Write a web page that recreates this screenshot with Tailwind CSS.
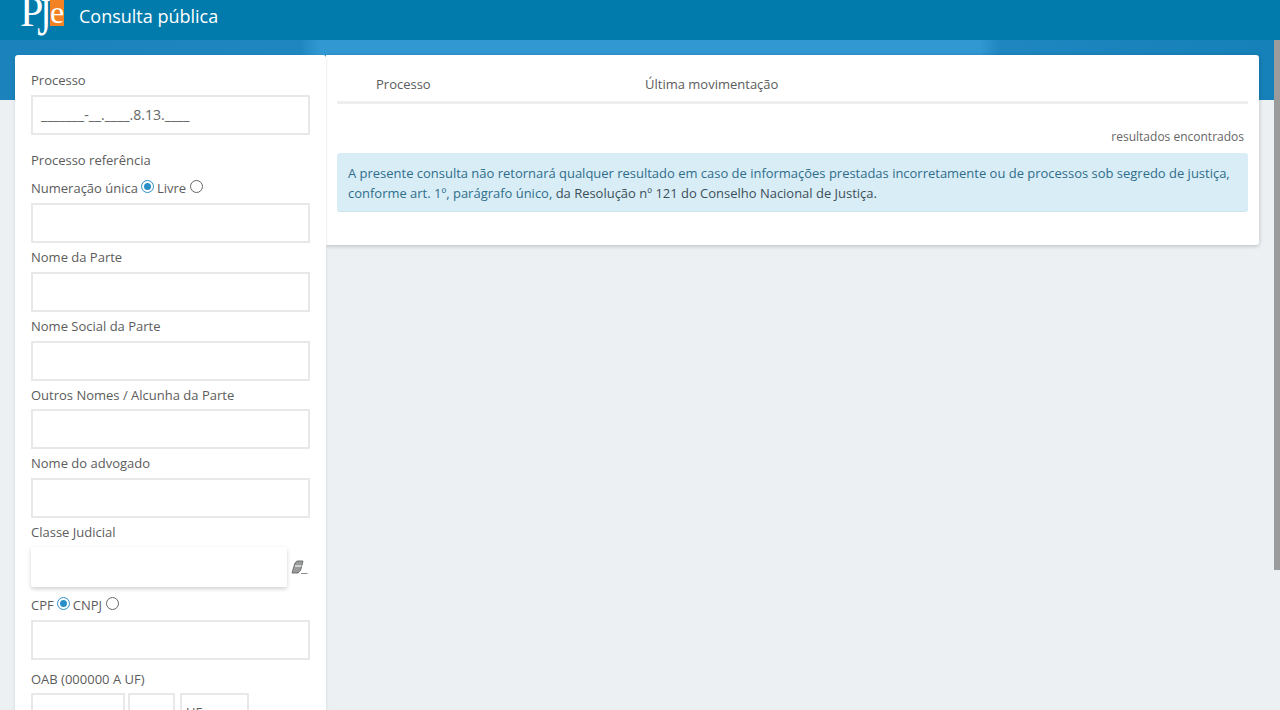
<!DOCTYPE html>
<html lang="pt-BR">
<head>
  <meta charset="UTF-8" />
  <title>Consulta pública</title>
  <script src="https://cdn.jsdelivr.net/npm/@tailwindcss/browser@4"></script>
</head>
<body class="h-[710px] overflow-hidden bg-[#ecf0f2] font-['Open_Sans',sans-serif] text-[13px] leading-[18px] text-[#5c5c5c]">

  <!-- Header -->
  <header class="h-10 bg-[#007bac] flex items-center relative z-10">
    <div class="relative w-[79px] h-10 shrink-0 font-['Liberation_Serif',serif] text-white">
      <span class="absolute left-[20px] top-[-12px] text-[42px] leading-[48px]">P</span>
      <span class="absolute left-[36px] top-[-14px] text-[42px] leading-[48px] origin-top scale-y-[1.3] scale-x-[0.85]">J</span>
      <span class="absolute left-[50px] top-0 w-[14px] h-[26px] bg-[#f28224] text-[32px] leading-[24px] text-center">e</span>
    </div>
    <span class="text-[18px] text-white mb-2">Consulta pública</span>
  </header>

  <!-- Blue band behind the panels -->
  <div class="absolute left-0 right-0 top-10 h-[60px] bg-[linear-gradient(90deg,#1b82bc_0,#1f86c0_300px,#3298d2_320px,#3298d2_980px,#1f86c0_1000px,#1580b8_1280px)]"></div>

  <main class="relative flex items-start pl-[15px] pr-[21px] pt-[15px]">
    <!-- Search form -->
    <aside class="relative z-10 w-[311px] shrink-0 h-[700px] bg-white rounded-t-[3px] px-4 pt-4 shadow-[0_1px_3px_rgba(0,0,0,0.12)]">
      <label class="block h-[18px]">Processo</label>
      <div class="mt-[6px] h-10 w-[279px] border-2 border-[#e6e8e9] flex items-center pl-2 text-[#666] text-[14.1px]">_______-__.____.8.13.____</div>

      <label class="block h-[18px] mt-4">Processo referência</label>
      <div class="mt-[9px] h-[18px] flex items-center pt-px">
        <span>Numeração única</span>
        <span class="ml-[3px] w-[13px] h-[13px] rounded-full border border-[#2a8fc6] p-[2px] -mt-[3px]"><span class="block w-full h-full rounded-full bg-[#2a8fc6]"></span></span>
        <span class="ml-[3px]">Livre</span>
        <span class="ml-1 w-[13px] h-[13px] rounded-full border border-[#666] bg-white -mt-[3px]"></span>
      </div>
      <div class="mt-[7px] h-10 w-[279px] border-2 border-[#e6e8e9]"></div>

      <label class="block h-[18px] mt-[5px]">Nome da Parte</label>
      <div class="mt-[6px] h-10 w-[279px] border-2 border-[#e6e8e9]"></div>

      <label class="block h-[18px] mt-[5px]">Nome Social da Parte</label>
      <div class="mt-[6px] h-10 w-[279px] border-2 border-[#e6e8e9]"></div>

      <label class="block h-[18px] mt-[5px]">Outros Nomes / Alcunha da Parte</label>
      <div class="mt-[5px] h-10 w-[279px] border-2 border-[#e6e8e9]"></div>

      <label class="block h-[18px] mt-[5px]">Nome do advogado</label>
      <div class="mt-[6px] h-10 w-[279px] border-2 border-[#e6e8e9]"></div>

      <label class="block h-[18px] mt-[5px]">Classe Judicial</label>
      <div class="mt-[6px] flex items-center">
        <div class="h-10 w-[256px] rounded-[2px] bg-white shadow-[0_2px_4px_rgba(0,0,0,0.18)]"></div>
        <svg class="ml-[4px]" width="17" height="15" viewBox="0 0 17 15">
          <path d="M1 13 L4 3 L6 1 H12 L9.5 10.5 L7 13 Z" fill="#9a9c9c" stroke="#6f7171" stroke-width="1"/>
          <path d="M4 6 H10.5" stroke="#e2e3e3" stroke-width="1.5" fill="none"/>
          <path d="M10 13.5 H16.5" stroke="#8a8c8c" stroke-width="1" fill="none"/>
        </svg>
      </div>

      <div class="mt-[9px] h-[18px] flex items-center">
        <span>CPF</span>
        <span class="ml-[3px] w-[13px] h-[13px] rounded-full border border-[#2a8fc6] p-[2px] -mt-[3px]"><span class="block w-full h-full rounded-full bg-[#2a8fc6]"></span></span>
        <span class="ml-[3px]">CNPJ</span>
        <span class="ml-1 w-[13px] h-[13px] rounded-full border border-[#666] bg-white -mt-[3px]"></span>
      </div>
      <div class="mt-[6px] h-10 w-[279px] border-2 border-[#e6e8e9]"></div>

      <label class="block h-[18px] mt-[10px]">OAB (000000 A UF)</label>
      <div class="mt-[5px] flex">
        <div class="h-10 w-[94px] border-2 border-[#e6e8e9]"></div>
        <div class="h-10 w-[47px] ml-[3px] border-2 border-[#e6e8e9]"></div>
        <div class="h-10 w-[69px] ml-[5px] border-2 border-[#e6e8e9] pl-[4px] pt-[8px]">UF</div>
      </div>
    </aside>

    <!-- Results -->
    <section class="flex-1 h-[190px] bg-white rounded-r-[3px] px-[11px] shadow-[0_1px_4px_rgba(0,0,0,0.22)]">
      <div class="h-[49px] border-b-[3px] border-[#eceeef] flex items-center pt-[12px] pl-[39px]">
        <span class="w-[269px]">Processo</span>
        <span>Última movimentação</span>
      </div>
      <p class="mt-[24px] pr-[4px] text-right text-[12px] text-[#666]">resultados encontrados</p>
      <div class="mt-[7px] h-[59px] rounded-[3px] bg-[#d9edf7] px-[11px] pt-[11px] text-[#2f6d8b] text-[12.97px] leading-[19.5px] border-b border-[#d0e4ee]">
        A presente consulta não retornará qualquer resultado em caso de informações prestadas incorretamente ou de processos sob segredo de justiça, conforme art. 1º, parágrafo único, <span class="text-[#3c4f58]">da Resolução nº 121 do Conselho Nacional de Justiça.</span>
      </div>
    </section>
  </main>

  <!-- Scrollbar -->
  <div class="absolute right-0 top-10 w-[6px] h-[530px] bg-[#9b9b9b] z-20"></div>
</body>
</html>
